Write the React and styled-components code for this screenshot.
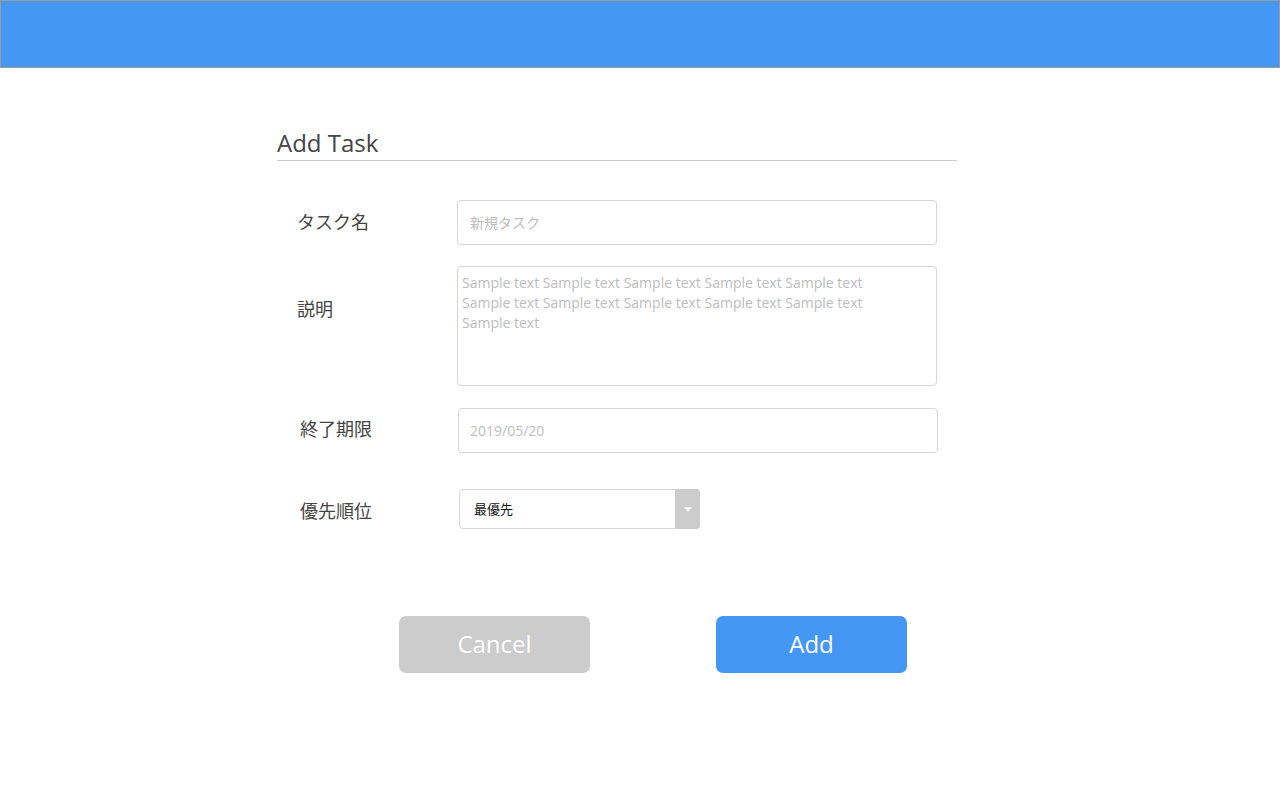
import styled, { createGlobalStyle } from "styled-components";

const GlobalStyle = createGlobalStyle`
  body {
    margin: 0;
    background: #fff;
    font-family: "Open Sans", "Noto Sans CJK JP", sans-serif;
    color: #444;
  }
`;

const App = () => {
  return (
    <>
      <GlobalStyle />
      <Header />
      <Form onSubmit={(e) => e.preventDefault()}>
        <Title>Add Task</Title>
        <Fields>
          <Row>
            <Label $shift={-1}>タスク名</Label>
            <TextInput type="text" placeholder="新規タスク" />
          </Row>
          <Row $gap={21} $align="start">
            <Label $top={31}>説明</Label>
            <TextArea placeholder="Sample text Sample text Sample text Sample text Sample text Sample text Sample text Sample text Sample text Sample text Sample text" />
          </Row>
          <Row $gap={22}>
            <Label $shift={-2} $indent={23}>終了期限</Label>
            <TextInput type="text" placeholder="2019/05/20" $shift={1} $pad={11} />
          </Row>
          <Row $gap={36}>
            <Label $shift={2} $indent={23}>優先順位</Label>
            <SelectWrap>
              <Select defaultValue="top">
                <option value="top">最優先</option>
                <option value="high">高</option>
                <option value="normal">普通</option>
                <option value="low">低</option>
              </Select>
              <Arrow>
                <svg width="8" height="5" viewBox="0 0 8 5">
                  <path d="M0 0h8L4 5z" fill="#fff" />
                </svg>
              </Arrow>
            </SelectWrap>
          </Row>
        </Fields>
        <Buttons>
          <Button type="button" $bg="#cccccc">Cancel</Button>
          <Button type="submit" $bg="#4597f4">Add</Button>
        </Buttons>
      </Form>
    </>
  );
};

const Header = styled.header`
  height: 68px;
  box-sizing: border-box;
  background: #4597f4;
  border: 1px solid #9a9a9a;
`;

const Form = styled.form`
  width: 680px;
  margin: 60px 0 0 277px;
`;

const Title = styled.h1`
  margin: 0;
  font-size: 24px;
  font-weight: 400;
  line-height: 30px;
  padding-bottom: 2px;
  color: #444;
  border-bottom: 1px solid #cccccc;
`;

const Fields = styled.div`
  margin-top: 39px;
  display: flex;
  flex-direction: column;
`;

const Row = styled.div`
  display: grid;
  grid-template-columns: 180px 480px;
  align-items: ${(p) => p.$align || "center"};
  margin-top: ${(p) => p.$gap || 0}px;
`;

const Label = styled.label`
  font-size: 18px;
  line-height: 24px;
  color: #444;
  margin-top: ${(p) => p.$top || 0}px;
  position: relative;
  top: ${(p) => p.$shift || 0}px;
  padding-left: ${(p) => p.$indent || 20}px;
`;

const fieldBase = `
  box-sizing: border-box;
  width: 480px;
  border: 1px solid #d6d6d6;
  border-radius: 4px;
  font-family: "Open Sans", "Noto Sans CJK JP", sans-serif;
  color: #444;
  outline: none;
  background: #fff;
  &::placeholder {
    color: #bdbdbd;
  }
`;

const TextInput = styled.input`
  ${fieldBase}
  height: 45px;
  padding: 0 ${(p) => p.$pad || 12}px;
  font-size: 14px;
  margin-left: ${(p) => p.$shift || 0}px;
`;

const TextArea = styled.textarea`
  ${fieldBase}
  height: 120px;
  padding: 6px 64px 6px 4px;
  font-size: 14px;
  line-height: 20px;
  resize: none;
`;

const SelectWrap = styled.div`
  position: relative;
  width: 241px;
  height: 40px;
  margin-left: 2px;
`;

const Select = styled.select`
  box-sizing: border-box;
  width: 100%;
  height: 100%;
  appearance: none;
  border: 1px solid #d6d6d6;
  border-radius: 4px;
  background: #fff;
  padding: 0 14px;
  font-family: "Open Sans", "Noto Sans CJK JP", sans-serif;
  font-size: 13px;
  color: #111;
  outline: none;
`;

const Arrow = styled.span`
  position: absolute;
  top: 0;
  right: 0;
  width: 25px;
  height: 40px;
  background: #cccccc;
  border-radius: 0 4px 4px 0;
  display: flex;
  align-items: center;
  justify-content: center;
  pointer-events: none;
`;

const Buttons = styled.div`
  display: flex;
  gap: 126px;
  padding-left: 122px;
  margin-top: 87px;
`;

const Button = styled.button`
  width: 191px;
  height: 57px;
  padding: 0 0 3px;
  border: none;
  border-radius: 7px;
  background: ${(p) => p.$bg};
  color: #fff;
  font-family: "Open Sans", sans-serif;
  font-size: 24px;
  cursor: pointer;
`;

export default App;
